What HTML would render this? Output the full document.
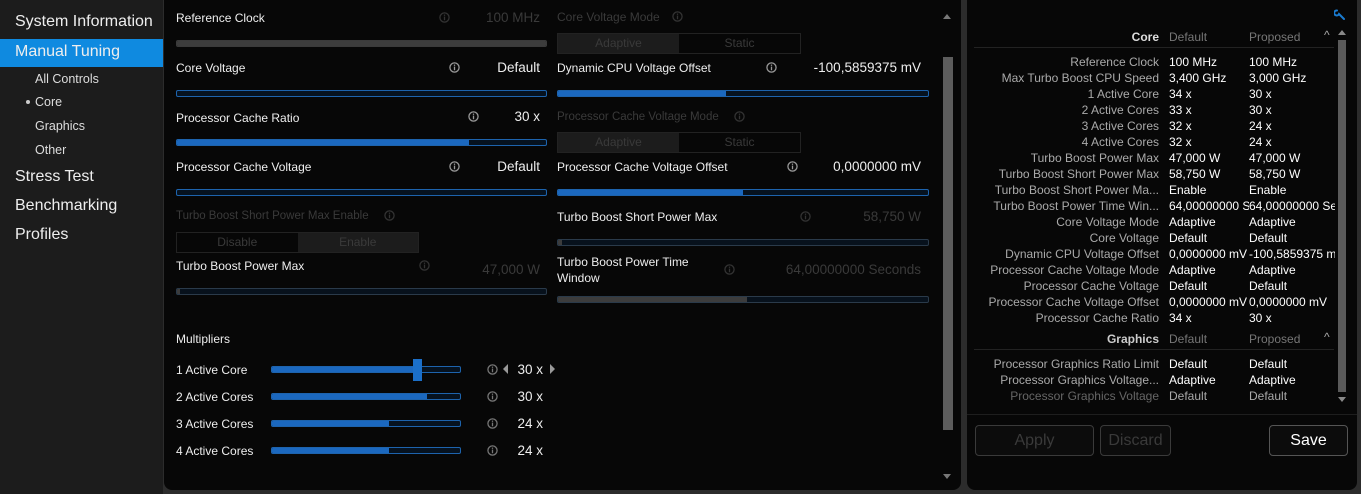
<!DOCTYPE html>
<html><head><meta charset="utf-8"><style>
*{margin:0;padding:0;box-sizing:border-box}
body{width:1361px;height:494px;background:#2c2c2c;font-family:"Liberation Sans",sans-serif;color:#fff;position:relative;overflow:hidden}
.a{position:absolute;white-space:nowrap;line-height:16px}
#side{position:absolute;left:0;top:0;width:163px;height:494px;background:#1c1c1c}
#mid{position:absolute;left:164px;top:0;width:797px;height:490px;background:#070707;border-radius:0 0 8px 8px}
#right{position:absolute;left:967px;top:0;width:390px;height:490px;background:#070707;border-radius:0 0 8px 8px}
.big{font-size:16px;color:#eee;left:15px}
.sub{font-size:12.5px;color:#ddd;left:35px}
.lb{font-size:12px;color:#eee}
.val{font-size:13.5px;color:#eee;text-align:right}
.dim{color:#3a3a3a !important}
.sl{position:absolute;height:7px;border:1px solid #1d63ad;border-radius:2px;background:#06121f;overflow:hidden}
.sl i{position:absolute;left:0;top:0;bottom:0;background:#1b68bf}
.sl.g{border-color:#3a3a3a;background:#111}
.sl.g i{background:#3c3c3c}
.tg{position:absolute;height:21px;border:1px solid #222;display:flex;font-size:12px;color:#3a3a3a}
.tg span{flex:1;text-align:center;line-height:19px}
.tg .on{background:#1c1c1c}
.ic{position:absolute;width:11px;height:11px}
.t{font-size:12px;line-height:16px}
.t div{white-space:nowrap}
.tl{position:absolute;right:178px;color:#aaa;text-align:right}
.td{position:absolute;left:202px;color:#fff}
.tp{position:absolute;left:282px;color:#fff}
.btn{position:absolute;height:31px;border:1px solid #3a3a3a;border-radius:4px;text-align:center;line-height:29px;font-size:16px;color:#3a3a3a;background:#0c0c0c}
</style></head><body>
<svg width="0" height="0" style="position:absolute"><defs><symbol id="inf" viewBox="0 0 12 12"><circle cx="6" cy="6" r="5" fill="none" stroke="currentColor" stroke-width="1.4"/><rect x="5.3" y="5" width="1.4" height="4" fill="currentColor"/><rect x="5.3" y="2.8" width="1.4" height="1.4" fill="currentColor"/></symbol></defs></svg>

<div id="side">
<div style="position:absolute;left:0;top:39px;width:163px;height:28px;background:#0f8ae0"></div>
<div class="a big" style="top:14px">System Information</div>
<div class="a big" style="top:44px">Manual Tuning</div>
<div class="a sub" style="top:71px">All Controls</div>
<div class="a sub" style="top:94px">Core</div>
<div style="position:absolute;left:26px;top:100px;width:4px;height:4px;border-radius:50%;background:#ccc"></div>
<div class="a sub" style="top:118px">Graphics</div>
<div class="a sub" style="top:142px">Other</div>
<div class="a big" style="top:169px">Stress Test</div>
<div class="a big" style="top:198px">Benchmarking</div>
<div class="a big" style="top:227px">Profiles</div>
</div>

<div id="mid"></div>
<div style="position:absolute;left:943px;top:57px;width:10px;height:373px;background:#5c5c5c"></div>
<div style="position:absolute;left:943px;top:14px;width:0;height:0;border-left:4px solid transparent;border-right:4px solid transparent;border-bottom:5px solid #777"></div>
<div style="position:absolute;left:943px;top:474px;width:0;height:0;border-left:4px solid transparent;border-right:4px solid transparent;border-top:5px solid #777"></div>

<div class="a lb" style="left:176px;top:10px">Reference Clock</div>
<svg class="ic" style="left:439px;top:12px;color:#333"><use href="#inf"/></svg>
<div class="a val dim" style="left:440px;width:100px;top:10px">100 MHz</div>
<div class="sl g" style="left:176px;top:40px;width:371px"><i style="width:100%"></i></div>

<div class="a lb" style="left:176px;top:60px">Core Voltage</div>
<svg class="ic" style="left:449px;top:62px;color:#999"><use href="#inf"/></svg>
<div class="a val" style="left:440px;width:100px;top:60px">Default</div>
<div class="sl" style="left:176px;top:90px;width:371px"></div>

<div class="a lb" style="left:176px;top:110px">Processor Cache Ratio</div>
<svg class="ic" style="left:468px;top:111px;color:#999"><use href="#inf"/></svg>
<div class="a val" style="left:440px;width:100px;top:109px">30 x</div>
<div class="sl" style="left:176px;top:139px;width:371px"><i style="width:292px"></i></div>

<div class="a lb" style="left:176px;top:159px">Processor Cache Voltage</div>
<svg class="ic" style="left:449px;top:161px;color:#999"><use href="#inf"/></svg>
<div class="a val" style="left:440px;width:100px;top:159px">Default</div>
<div class="sl" style="left:176px;top:189px;width:371px"></div>

<div class="a lb dim" style="left:176px;top:208px;font-size:11.5px">Turbo Boost Short Power Max Enable</div>
<svg class="ic" style="left:384px;top:210px;color:#333"><use href="#inf"/></svg>
<div class="tg" style="left:176px;top:232px;width:243px"><span>Disable</span><span class="on">Enable</span></div>

<div class="a lb" style="left:176px;top:258px">Turbo Boost Power Max</div>
<svg class="ic" style="left:419px;top:260px;color:#333"><use href="#inf"/></svg>
<div class="a val dim" style="left:440px;width:100px;top:262px">47,000 W</div>
<div class="sl g" style="left:176px;top:288px;width:371px;border-color:#2a3a4a;background:#07111c"><i style="width:3px"></i></div>

<div class="a lb dim" style="left:557px;top:9px">Core Voltage Mode</div>
<svg class="ic" style="left:672px;top:11px;color:#333"><use href="#inf"/></svg>
<div class="tg" style="left:557px;top:33px;width:244px"><span class="on">Adaptive</span><span>Static</span></div>

<div class="a lb" style="left:557px;top:60px">Dynamic CPU Voltage Offset</div>
<svg class="ic" style="left:766px;top:62px;color:#999"><use href="#inf"/></svg>
<div class="a val" style="left:760px;width:161px;top:60px">-100,5859375 mV</div>
<div class="sl" style="left:557px;top:90px;width:372px"><i style="width:168px"></i></div>

<div class="a lb dim" style="left:557px;top:109px;font-size:11.5px">Processor Cache Voltage Mode</div>
<svg class="ic" style="left:734px;top:111px;color:#333"><use href="#inf"/></svg>
<div class="tg" style="left:557px;top:132px;width:244px"><span class="on">Adaptive</span><span>Static</span></div>

<div class="a lb" style="left:557px;top:159px">Processor Cache Voltage Offset</div>
<svg class="ic" style="left:787px;top:161px;color:#999"><use href="#inf"/></svg>
<div class="a val" style="left:760px;width:161px;top:159px">0,0000000 mV</div>
<div class="sl" style="left:557px;top:189px;width:372px"><i style="width:185px"></i></div>

<div class="a lb" style="left:557px;top:209px">Turbo Boost Short Power Max</div>
<svg class="ic" style="left:800px;top:211px;color:#333"><use href="#inf"/></svg>
<div class="a val dim" style="left:800px;width:121px;top:209px">58,750 W</div>
<div class="sl g" style="left:557px;top:239px;width:372px;border-color:#2a3a4a;background:#07111c"><i style="width:4px"></i></div>

<div class="a lb" style="left:557px;top:254px">Turbo Boost Power Time</div>
<div class="a lb" style="left:557px;top:270px">Window</div>
<svg class="ic" style="left:724px;top:264px;color:#333"><use href="#inf"/></svg>
<div class="a val dim" style="left:760px;width:161px;top:262px">64,00000000 Seconds</div>
<div class="sl g" style="left:557px;top:296px;width:372px;border-color:#2a3a4a;background:#07111c"><i style="width:189px"></i></div>

<div class="a lb" style="left:176px;top:331px">Multipliers</div>
<div class="a lb" style="left:176px;top:362px">1 Active Core</div>
<div class="sl" style="left:271px;top:366px;width:190px"><i style="width:145px"></i></div>
<div style="position:absolute;left:413px;top:359px;width:9px;height:22px;background:#1b6fc9"></div>
<svg class="ic" style="left:487px;top:364px;color:#777"><use href="#inf"/></svg>
<div style="position:absolute;left:503px;top:364px;border-top:5px solid transparent;border-bottom:5px solid transparent;border-right:5px solid #999"></div>
<div class="a val" style="left:510px;width:33px;top:362px">30 x</div>
<div style="position:absolute;left:550px;top:364px;border-top:5px solid transparent;border-bottom:5px solid transparent;border-left:5px solid #999"></div>

<div class="a lb" style="left:176px;top:389px">2 Active Cores</div>
<div class="sl" style="left:271px;top:393px;width:190px"><i style="width:155px"></i></div>
<svg class="ic" style="left:487px;top:391px;color:#777"><use href="#inf"/></svg>
<div class="a val" style="left:510px;width:33px;top:389px">30 x</div>

<div class="a lb" style="left:176px;top:416px">3 Active Cores</div>
<div class="sl" style="left:271px;top:420px;width:190px"><i style="width:117px"></i></div>
<svg class="ic" style="left:487px;top:418px;color:#777"><use href="#inf"/></svg>
<div class="a val" style="left:510px;width:33px;top:416px">24 x</div>

<div class="a lb" style="left:176px;top:443px">4 Active Cores</div>
<div class="sl" style="left:271px;top:447px;width:190px"><i style="width:117px"></i></div>
<svg class="ic" style="left:487px;top:445px;color:#777"><use href="#inf"/></svg>
<div class="a val" style="left:510px;width:33px;top:443px">24 x</div>

<div id="right">
<svg style="position:absolute;left:367px;top:9px" width="12" height="12" viewBox="0 0 12 12"><path d="M3 1.5 A2.5 2.5 0 1 0 5 5 L10 10" stroke="#1a7bd0" stroke-width="2" fill="none" stroke-linecap="round"/></svg>
<div style="position:absolute;left:7px;top:47px;width:360px;height:1px;background:#222"></div>
<div class="a t" style="right:198px;top:29px;color:#ddd;font-weight:bold">Core</div>
<div class="a t" style="left:202px;top:29px;color:#777">Default</div>
<div class="a t" style="left:282px;top:29px;color:#777">Proposed</div>
<div class="a t" style="left:357px;top:27px;color:#aaa">^</div>
<div style="position:absolute;left:371px;top:30px;border-left:4px solid transparent;border-right:4px solid transparent;border-bottom:5px solid #888"></div>
<div style="position:absolute;left:371px;top:397px;border-left:4px solid transparent;border-right:4px solid transparent;border-top:5px solid #888"></div>
<div style="position:absolute;left:371px;top:40px;width:8px;height:352px;background:#5a5a5a"></div>
<div class="t" style="position:absolute;left:0;top:54px;width:370px;height:275px;overflow:hidden">
<div class="tl" style="top:0">Reference Clock</div><div class="td" style="top:0">100 MHz</div><div class="tp" style="top:0">100 MHz</div>
<div class="tl" style="top:16px">Max Turbo Boost CPU Speed</div><div class="td" style="top:16px">3,400 GHz</div><div class="tp" style="top:16px">3,000 GHz</div>
<div class="tl" style="top:32px">1 Active Core</div><div class="td" style="top:32px">34 x</div><div class="tp" style="top:32px">30 x</div>
<div class="tl" style="top:48px">2 Active Cores</div><div class="td" style="top:48px">33 x</div><div class="tp" style="top:48px">30 x</div>
<div class="tl" style="top:64px">3 Active Cores</div><div class="td" style="top:64px">32 x</div><div class="tp" style="top:64px">24 x</div>
<div class="tl" style="top:80px">4 Active Cores</div><div class="td" style="top:80px">32 x</div><div class="tp" style="top:80px">24 x</div>
<div class="tl" style="top:96px">Turbo Boost Power Max</div><div class="td" style="top:96px">47,000 W</div><div class="tp" style="top:96px">47,000 W</div>
<div class="tl" style="top:112px">Turbo Boost Short Power Max</div><div class="td" style="top:112px">58,750 W</div><div class="tp" style="top:112px">58,750 W</div>
<div class="tl" style="top:128px">Turbo Boost Short Power Ma...</div><div class="td" style="top:128px">Enable</div><div class="tp" style="top:128px">Enable</div>
<div class="tl" style="top:144px">Turbo Boost Power Time Win...</div><div class="td" style="top:144px;width:80px;overflow:hidden">64,00000000 Seconds</div><div class="tp" style="top:144px;width:86px;overflow:hidden">64,00000000 Seconds</div>
<div class="tl" style="top:160px">Core Voltage Mode</div><div class="td" style="top:160px">Adaptive</div><div class="tp" style="top:160px">Adaptive</div>
<div class="tl" style="top:176px">Core Voltage</div><div class="td" style="top:176px">Default</div><div class="tp" style="top:176px">Default</div>
<div class="tl" style="top:192px">Dynamic CPU Voltage Offset</div><div class="td" style="top:192px">0,0000000 mV</div><div class="tp" style="top:192px;width:86px;overflow:hidden">-100,5859375 mV</div>
<div class="tl" style="top:208px">Processor Cache Voltage Mode</div><div class="td" style="top:208px">Adaptive</div><div class="tp" style="top:208px">Adaptive</div>
<div class="tl" style="top:224px">Processor Cache Voltage</div><div class="td" style="top:224px">Default</div><div class="tp" style="top:224px">Default</div>
<div class="tl" style="top:240px">Processor Cache Voltage Offset</div><div class="td" style="top:240px">0,0000000 mV</div><div class="tp" style="top:240px">0,0000000 mV</div>
<div class="tl" style="top:256px">Processor Cache Ratio</div><div class="td" style="top:256px">34 x</div><div class="tp" style="top:256px">30 x</div>
</div>
<div style="position:absolute;left:7px;top:349px;width:360px;height:1px;background:#222"></div>
<div class="a t" style="right:198px;top:331px;color:#ccc;font-weight:bold">Graphics</div>
<div class="a t" style="left:202px;top:331px;color:#777">Default</div>
<div class="a t" style="left:282px;top:331px;color:#777">Proposed</div>
<div class="a t" style="left:357px;top:329px;color:#aaa">^</div>
<div class="t" style="position:absolute;left:0;top:356px;width:370px;height:50px">
<div class="tl" style="top:0">Processor Graphics Ratio Limit</div><div class="td" style="top:0">Default</div><div class="tp" style="top:0">Default</div>
<div class="tl" style="top:16px">Processor Graphics Voltage...</div><div class="td" style="top:16px">Adaptive</div><div class="tp" style="top:16px">Adaptive</div>
<div class="tl" style="top:32px;color:#666">Processor Graphics Voltage</div><div class="td" style="top:32px;color:#aaa">Default</div><div class="tp" style="top:32px;color:#aaa">Default</div>
</div>
<div style="position:absolute;left:0;top:414px;width:390px;height:1px;background:#1e1e1e"></div>
<div class="btn" style="left:8px;top:425px;width:119px">Apply</div>
<div class="btn" style="left:133px;top:425px;width:71px">Discard</div>
<div class="btn" style="left:302px;top:425px;width:79px;color:#fff;border-color:#555">Save</div>
</div>
</body></html>
